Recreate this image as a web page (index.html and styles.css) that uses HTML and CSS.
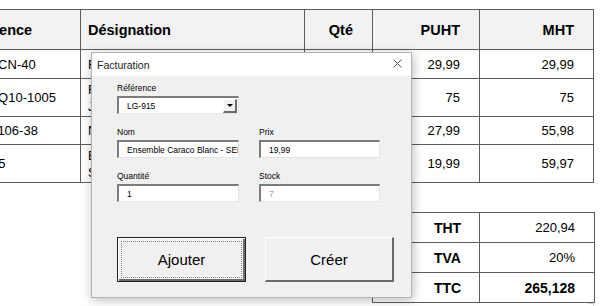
FILE: index.html
```html
<!DOCTYPE html>
<html lang="fr">
<head>
    <meta charset="UTF-8">
    <title>Facturation</title>
    <link rel="stylesheet" href="styles.css">
</head>
<body>
<div id="sheet">
    <table id="lignes">
        <colgroup>
            <col class="c-ref">
            <col class="c-des">
            <col class="c-qte">
            <col class="c-pu">
            <col class="c-mt">
        </colgroup>
        <tr class="entete">
            <th class="gauche">Référence</th>
            <th class="gauche">Désignation</th>
            <th>Qté</th>
            <th>PUHT</th>
            <th>MHT</th>
        </tr>
        <tr class="h1">
            <td class="gauche">SOIR-CN-40</td>
            <td class="gauche">Foulard soie motif cachemire</td>
            <td>1</td>
            <td>29,99</td>
            <td>29,99</td>
        </tr>
        <tr class="h2">
            <td class="gauche">ROBI-Q10-1005</td>
            <td class="gauche des2">Robe longue fluide imprimée<br>Jaune moutarde</td>
            <td>1</td>
            <td>75</td>
            <td>75</td>
        </tr>
        <tr class="h3">
            <td class="gauche">NUIS-106-38</td>
            <td class="gauche">Nuisette dentelle noire</td>
            <td>2</td>
            <td>27,99</td>
            <td>55,98</td>
        </tr>
        <tr class="h2">
            <td class="gauche">LG-915</td>
            <td class="gauche des2">Ensemble Caraco Blanc -<br>SEDUCTION</td>
            <td>3</td>
            <td>19,99</td>
            <td>59,97</td>
        </tr>
    </table>

    <table id="totaux">
        <colgroup>
            <col class="c-lib">
            <col class="c-val">
        </colgroup>
        <tr>
            <th>THT</th>
            <td>220,94</td>
        </tr>
        <tr>
            <th>TVA</th>
            <td>20%</td>
        </tr>
        <tr>
            <th>TTC</th>
            <td class="gras">265,128</td>
        </tr>
    </table>
    <div class="coin"></div>
</div>

<!-- fenetre userform par dessus la feuille -->
<div id="fenetre">
    <div class="titre">
        <span>Facturation</span>
        <svg class="fermer" width="9" height="9" viewBox="0 0 9 9">
            <path d="M0.5 0.5 L8.5 8.5 M8.5 0.5 L0.5 8.5" stroke="#444" stroke-width="0.9" fill="none"/>
        </svg>
    </div>
    <div class="corps">
        <div class="champs">
            <div class="champ">
                <label>Référence</label>
                <div class="saisie combo">
                    <span>LG-915</span>
                    <span class="fleche"><i></i></span>
                </div>
            </div>
            <div class="champ"></div>
            <div class="champ">
                <label>Nom</label>
                <div class="saisie"><span>Ensemble Caraco Blanc - SEDUCTION</span></div>
            </div>
            <div class="champ">
                <label>Prix</label>
                <div class="saisie"><span>19,99</span></div>
            </div>
            <div class="champ">
                <label>Quantité</label>
                <div class="saisie"><span>1</span></div>
            </div>
            <div class="champ">
                <label>Stock</label>
                <div class="saisie inactif"><span>7</span></div>
            </div>
        </div>
        <div class="boutons">
            <div class="bouton defaut"><span>Ajouter</span></div>
            <div class="bouton"><span>Créer</span></div>
        </div>
    </div>
</div>
</body>
</html>
```

FILE: styles.css
```css
body{
    margin: 0;
    background: #fff;
    font-family: "Liberation Sans", Arial, sans-serif;
    color: #000;
    overflow: hidden;
}
#sheet{
    padding-top: 9px;
    width: 600px;
    height: 297px;
    overflow: hidden;
}

/* tableau des lignes */
#lignes{
    border-collapse: collapse;
    table-layout: fixed;
    width: 639px;
    margin-left: -46px;
    font-size: 13px;
}
.c-ref{ width: 126px; }
.c-des{ width: 224px; }
.c-qte{ width: 68px; }
.c-pu{ width: 107px; }
.c-mt{ width: 114px; }

#lignes th, #lignes td{
    border: 1px solid #5c5c5c;
    text-align: right;
    padding: 0 19px 0 7px;
    white-space: nowrap;
    overflow: hidden;
}
#lignes .entete th{
    height: 39px;
    background: #f2f2f2;
    font-size: 14.5px;
    font-weight: bold;
}
#lignes .gauche{
    text-align: left;
}
#lignes tr.h1 td{ height: 28px; }
#lignes tr.h2 td{ height: 37px; }
#lignes tr.h3 td{ height: 27px; }
#lignes td.des2{
    line-height: 17px;
}

/* totaux */
#totaux{
    border-collapse: collapse;
    table-layout: fixed;
    width: 222px;
    margin: 29px 0 0 372px;
    font-size: 13px;
}
.c-lib{ width: 107px; }
.c-val{ width: 115px; }
#totaux th{
    height: 27px;
    border: 1px solid #5c5c5c;
    text-align: center;
    padding-left: 44px;
    font-size: 14px;
}
#totaux td{
    border: 1px solid #5c5c5c;
    text-align: right;
    padding-right: 19px;
}
#totaux .gras{
    font-weight: bold;
    font-size: 14px;
}
.coin{
    width: 6px;
    height: 12px;
    margin-left: 588px;
    border-top: 1px solid #d4d4d4;
    border-right: 1px solid #d4d4d4;
    box-sizing: border-box;
}

/* fenetre */
#fenetre{
    position: absolute;
    left: 91px;
    top: 52px;
    width: 321px;
    height: 246px;
    box-sizing: border-box;
    border: 1px solid #b4b4b4;
    background: #f0f0f0;
    box-shadow: 1px 2px 10px rgba(0,0,0,0.28);
}
.titre{
    height: 23px;
    background: #fff;
    display: flex;
    align-items: center;
    justify-content: space-between;
    padding: 0 9px 0 5px;
    font-size: 10.5px;
    color: #222;
}
.fermer{
    margin-top: -2px;
}
.corps{
    padding: 6px 0 0 25px;
}
.champs{
    display: grid;
    grid-template-columns: 122px 121px;
    column-gap: 20px;
    row-gap: 12px;
}
.champ label{
    display: block;
    height: 12px;
    line-height: 12px;
    margin-bottom: 2px;
    font-size: 8.5px;
    color: #000;
}
.saisie{
    height: 18px;
    box-sizing: border-box;
    background: #fff;
    border-top: 2px solid #7c7c7c;
    border-left: 2px solid #7c7c7c;
    border-right: 1px solid #e4e4e4;
    border-bottom: 1px solid #e4e4e4;
    display: flex;
    align-items: center;
    padding-left: 8px;
    font-size: 8.5px;
    overflow: hidden;
    white-space: nowrap;
}
.saisie span{
    flex: 1;
    overflow: hidden;
}
.inactif{
    color: #a0a0a0;
}
.combo{
    padding-right: 1px;
}
.combo .fleche{
    flex: none;
    width: 14px;
    height: 14px;
    box-sizing: border-box;
    background: #f0f0f0;
    border-top: 1px solid #fff;
    border-left: 1px solid #fff;
    border-right: 2px solid #6a6a6a;
    border-bottom: 2px solid #6a6a6a;
    display: flex;
    align-items: center;
    justify-content: center;
}
.fleche i{
    width: 0;
    height: 0;
    border-left: 3px solid transparent;
    border-right: 3px solid transparent;
    border-top: 3px solid #000;
    margin-top: 1px;
}
.boutons{
    display: flex;
    gap: 19px;
    margin-top: 35px;
}
.bouton{
    width: 129px;
    height: 45px;
    box-sizing: border-box;
    background: #f0f0f0;
    border-top: 1px solid #fff;
    border-left: 1px solid #fff;
    border-right: 2px solid #6a6a6a;
    border-bottom: 2px solid #6a6a6a;
    display: flex;
    align-items: center;
    justify-content: center;
    font-size: 15px;
}
.defaut{
    border: 1px solid #222;
    box-shadow: inset 1px 1px #fff, inset -2px -2px #6a6a6a;
    padding: 3px;
}
.defaut span{
    flex: 1;
    align-self: stretch;
    display: flex;
    align-items: center;
    justify-content: center;
    border: 1px dotted #8a8a8a;
}
```
